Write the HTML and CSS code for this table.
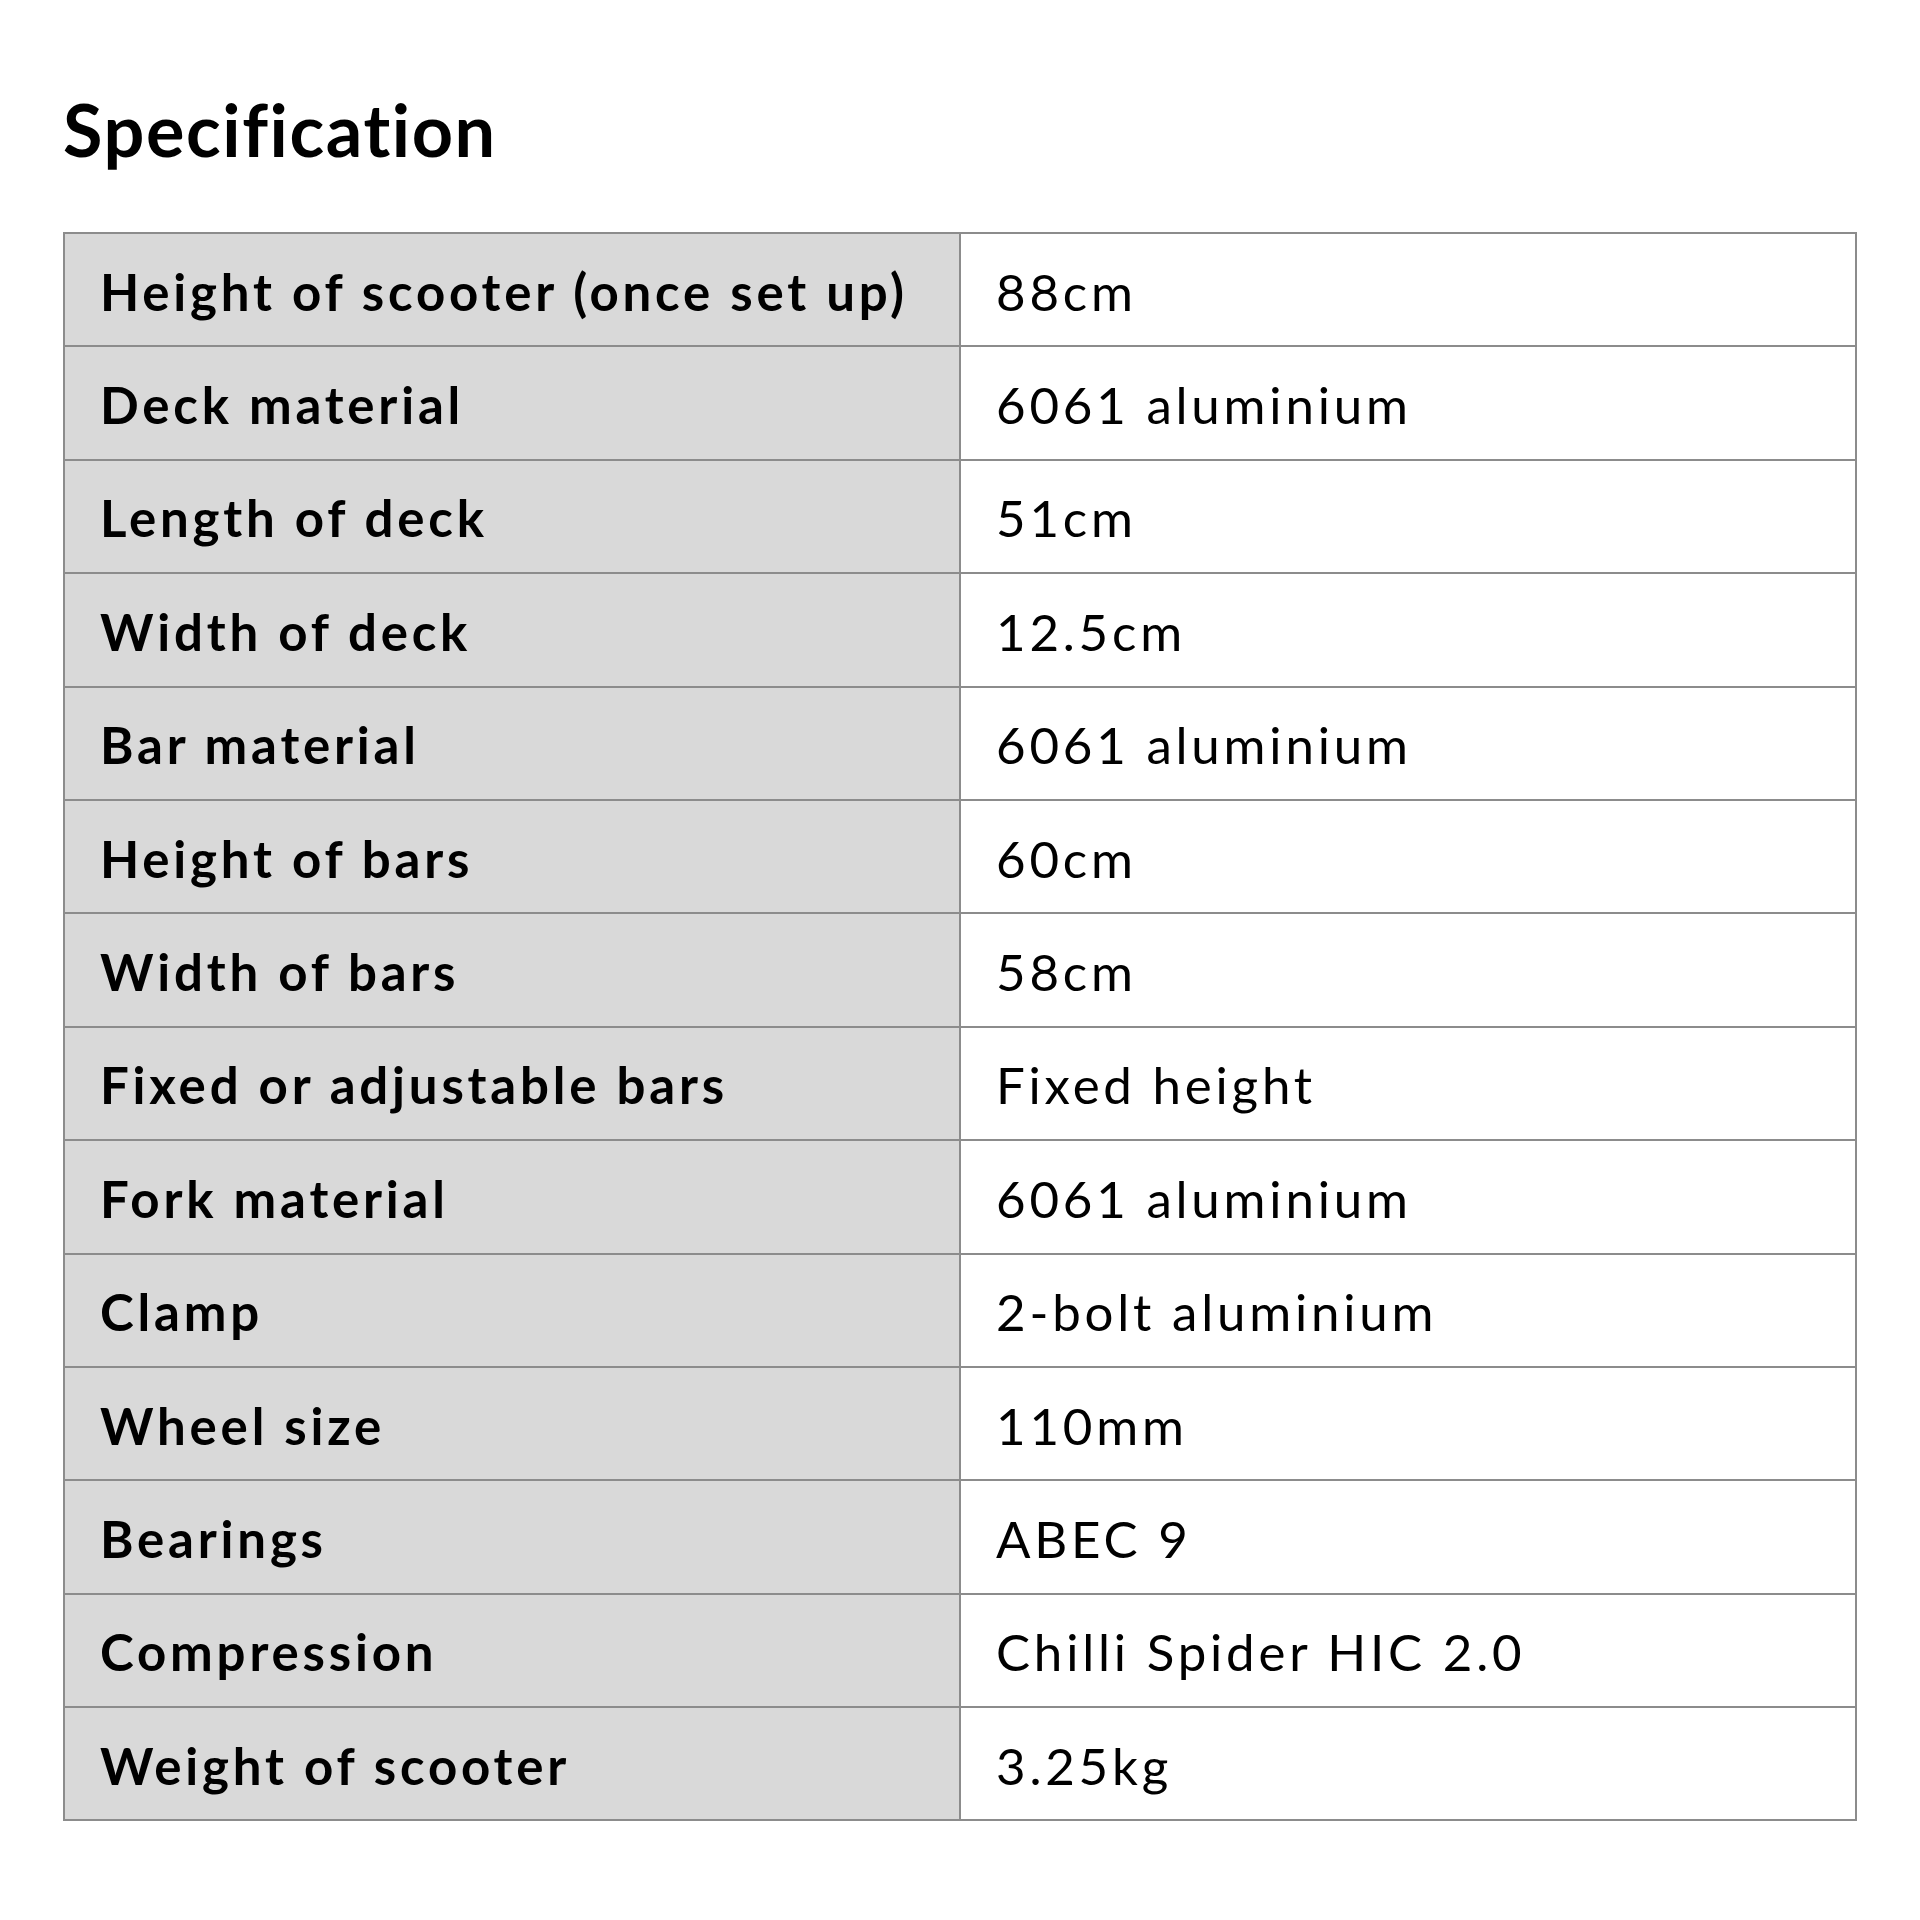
FILE: index.html
```html
<!DOCTYPE html>
<html lang="en">
<head>
<meta charset="utf-8">
<title>Specification</title>
<link rel="stylesheet" href="styles.css">
</head>
<body>
<main class="page">
  <h1 class="title">Specification</h1>
  <table class="spec">
    <tbody>
      <tr><th>Height of scooter (once set up)</th><td>88cm</td></tr>
      <tr><th>Deck material</th><td>6061 aluminium</td></tr>
      <tr><th>Length of deck</th><td>51cm</td></tr>
      <tr><th>Width of deck</th><td>12.5cm</td></tr>
      <tr><th>Bar material</th><td>6061 aluminium</td></tr>
      <tr><th>Height of bars</th><td>60cm</td></tr>
      <tr><th>Width of bars</th><td>58cm</td></tr>
      <tr><th>Fixed or adjustable bars</th><td>Fixed height</td></tr>
      <tr><th>Fork material</th><td>6061 aluminium</td></tr>
      <tr><th>Clamp</th><td>2-bolt aluminium</td></tr>
      <tr><th>Wheel size</th><td>110mm</td></tr>
      <tr><th>Bearings</th><td>ABEC 9</td></tr>
      <tr><th>Compression</th><td>Chilli Spider HIC 2.0</td></tr>
      <tr><th>Weight of scooter</th><td>3.25kg</td></tr>
    </tbody>
  </table>
</main>
</body>
</html>
```
FILE: styles.css
```css
html, body {
  margin: 0;
  padding: 0;
  background: #ffffff;
}
.page {
  padding: 93px 63px 0 63px;
  font-family: Lato, "Open Sans", sans-serif;
  font-variant-ligatures: none;
  color: #000;
}
.title {
  margin: 0 0 67px 0;
  font-size: 72px;
  line-height: 72px;
  font-weight: 700;
  letter-spacing: 1.6px;
}
.spec {
  width: 100%;
  border-collapse: collapse;
  table-layout: fixed;
}
.spec th,
.spec td {
  border: 2px solid #8c8c8c;
  height: 113.4px;
  padding: 3px 0 0 35px;
  text-align: left;
  vertical-align: middle;
  font-size: 51px;
  line-height: 1;
  letter-spacing: 3.8px;
  box-sizing: border-box;
  white-space: nowrap;
}
.spec th {
  width: 50%;
  background: #d9d9d9;
  font-weight: 700;
}
.spec td {
  background: #ffffff;
  font-weight: 400;
}
```
